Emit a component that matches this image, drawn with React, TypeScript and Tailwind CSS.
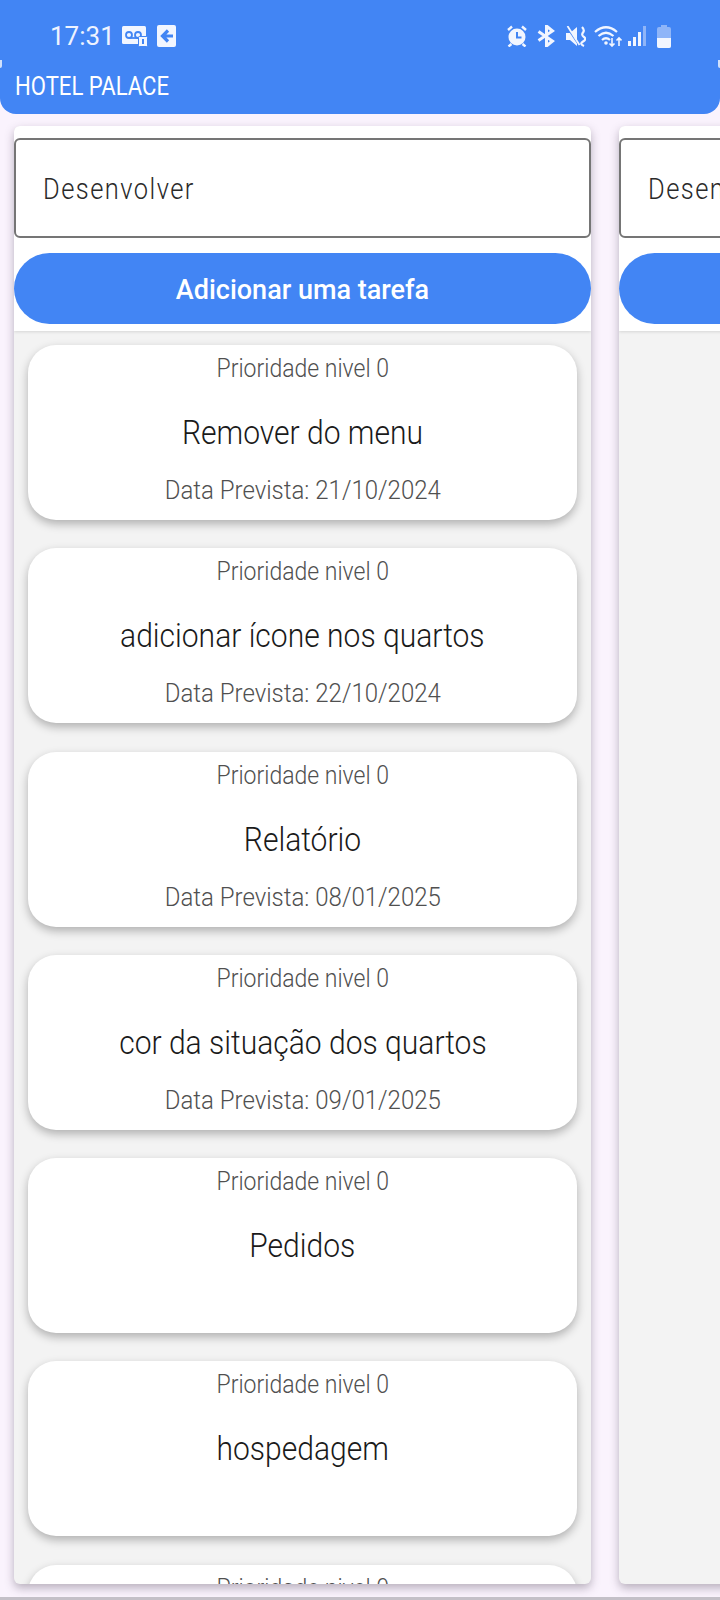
const abel = "font-['Roboto',sans-serif] font-light inline-block whitespace-nowrap";

function Card({ title, date }: { title: string; date?: string }) {
  return (
    <div className="shrink-0 h-[175px] rounded-[28px] bg-white shadow-[0_4px_10px_rgba(0,0,0,0.28)] flex flex-col items-center">
      <div className={`${abel} mt-[9px] h-[30px] leading-[30px] text-[25px] text-[#505050] scale-x-[0.92]`}>Prioridade nivel 0</div>
      <div className={`${abel} mt-[29px] h-[40px] leading-[40px] text-[33px] text-[#1a1a1a] scale-x-[0.91]`}>{title}</div>
      <div className={`${abel} mt-[23px] h-[30px] leading-[30px] text-[25px] text-[#505050] scale-x-[0.96]`}>{date}</div>
    </div>
  );
}

function Column({ children }: { children?: React.ReactNode }) {
  return (
    <div className="shrink-0 w-[577px] h-[1458px] flex flex-col bg-[#f3f3f3] rounded-[6px] overflow-hidden shadow-[0_4px_10px_rgba(60,50,70,0.35)]">
      <div className="shrink-0 bg-white h-[205px] pt-[12px] pb-[7px] flex flex-col shadow-[0_1px_3px_rgba(0,0,0,0.12)]">
        <div className="h-[100px] rounded-[6px] border-2 border-[#757575] bg-white flex items-center pl-[27px] overflow-hidden">
          <span className={`${abel} text-[30px] tracking-[1.7px] text-[#2a2a2a] origin-left scale-x-[0.85]`}>Desenvolver</span>
        </div>
        <div className="mt-[15px] h-[71px] rounded-full bg-[#4285f4] flex items-center justify-center font-['Roboto',sans-serif] font-medium text-[27px] text-white pt-[3px]">Adicionar uma tarefa</div>
      </div>
      {children}
    </div>
  );
}

const items: [string, string?][] = [
  ["Remover do menu", "Data Prevista: 21/10/2024"],
  ["adicionar ícone nos quartos", "Data Prevista: 22/10/2024"],
  ["Relatório", "Data Prevista: 08/01/2025"],
  ["cor da situação dos quartos", "Data Prevista: 09/01/2025"],
  ["Pedidos"],
  ["hospedagem"],
  [""],
];

function StatusLeft() {
  return (
    <div className="flex items-center pl-[50px]">
      <span className="w-[62px] whitespace-nowrap font-['Roboto',sans-serif] text-[26px] leading-none text-[#eef3ff]">17:31</span>
      <svg className="ml-[10px]" width="26" height="21" viewBox="0 0 26 21">
        <rect x="0" y="0" width="24" height="18" rx="1.500" fill="#f2f6ff" />
        <circle cx="7" cy="9" r="3" fill="none" stroke="#4285f4" strokeWidth="1.800" />
        <circle cx="16" cy="9" r="3" fill="none" stroke="#4285f4" strokeWidth="1.800" />
        <path d="M7 12h9" stroke="#4285f4" strokeWidth="1.800" />
        <rect x="16.500" y="10.500" width="9" height="10" rx="1" fill="#f2f6ff" stroke="#4285f4" strokeWidth="1" />
        <rect x="20" y="13" width="2" height="5" fill="#4285f4" />
      </svg>
      <svg className="ml-[9px]" width="19" height="22" viewBox="0 0 19 22">
        <rect width="19" height="22" rx="2" fill="#f2f6ff" />
        <path d="M16 11H6M11 5.500L5.500 11l5.500 5.500" fill="none" stroke="#4285f4" strokeWidth="3.200" />
      </svg>
    </div>
  );
}

function StatusRight() {
  return (
    <div className="flex items-center pr-[49px]">
      <svg width="20" height="22" viewBox="0 0 20 22">
        <circle cx="10" cy="12" r="8.500" fill="#f2f6ff" />
        <path d="M10 7v5.500h4.500" fill="none" stroke="#4285f4" strokeWidth="2" />
        <path d="M1 5l4-3.500M19 5l-4-3.500M4.500 19l-3 2.500M15.500 19l3 2.500" stroke="#f2f6ff" strokeWidth="2.400" />
      </svg>
      <svg className="ml-[10px]" width="18" height="22" viewBox="0 0 18 22">
        <path d="M1.500 6.500l14 9.500-6 5V1l6 5-14 9.500" fill="none" stroke="#f2f6ff" strokeWidth="3" />
      </svg>
      <svg className="ml-[11px]" width="20" height="21" viewBox="0 0 20 21">
        <path d="M0 7h4l7-6v19l-7-6H0z" fill="#f2f6ff" />
        <path d="M1 1l12 18" stroke="#4285f4" strokeWidth="1.800" />
        <path d="M1.500 0l12 19" stroke="#f2f6ff" strokeWidth="1.800" />
        <path d="M16 1q3 3 1 5.500t1 4.500t-1 4.500t1 4.500" fill="none" stroke="#f2f6ff" strokeWidth="2.200" />
      </svg>
      <svg className="ml-[8px]" width="28" height="22" viewBox="0 0 28 22">
        <path d="M1 7q11-9.500 22 0M4.500 11q7.500-6.500 15 0M8 15q4-3.500 8 0" fill="none" stroke="#f2f6ff" strokeWidth="2.200" />
        <circle cx="12" cy="18" r="1.800" fill="#f2f6ff" />
        <path d="M18 13v8M15.500 18.500l2.500 2.500 2.500-2.500M25 21v-8M22.500 15.500l2.500-2.500 2.500 2.500" fill="none" stroke="#f2f6ff" strokeWidth="1.600" />
      </svg>
      <svg className="ml-[6px]" width="18" height="20" viewBox="0 0 18 20">
        <rect x="0" y="15" width="3" height="5" fill="#f2f6ff" />
        <rect x="5" y="11" width="3" height="9" fill="#f2f6ff" />
        <rect x="10" y="6" width="3" height="14" fill="#f2f6ff" />
        <rect x="15" y="0" width="3" height="20" fill="#8fb5f8" />
      </svg>
      <svg className="ml-[11px]" width="14" height="23" viewBox="0 0 14 23">
        <path d="M4 0h6v2h2a2 2 0 0 1 2 2v17a2 2 0 0 1-2 2H2a2 2 0 0 1-2-2V4a2 2 0 0 1 2-2h2z" fill="#8fb5f8" />
        <path d="M0 13h14v8a2 2 0 0 1-2 2H2a2 2 0 0 1-2-2z" fill="#f2f6ff" />
      </svg>
    </div>
  );
}

export default function App() {
  return (
    <div className="w-[720px] h-[1600px] overflow-hidden bg-[#faf3fd] flex flex-col relative">
      <header className="shrink-0 h-[114px] bg-[#4285f4] rounded-b-[16px] flex flex-col relative">
        <div className="flex justify-between items-center h-[72px]">
          <StatusLeft />
          <StatusRight />
        </div>
        <div className="pl-[15px] h-[29px] leading-[29px]">
          <span className={`${abel} text-[26px] text-white font-normal origin-left scale-x-[0.85]`}>HOTEL PALACE</span>
        </div>
        <div className="absolute left-0 top-[60px] w-[2px] h-[8px] bg-[#cfe0fb] rounded-br-full" />
        <div className="absolute right-0 top-[60px] w-[2px] h-[8px] bg-[#cfe0fb] rounded-bl-full" />
      </header>
      <main className="mt-[12px] pl-[14px] flex gap-[28px]">
        <Column>
          <div className="flex flex-col gap-[28.25px] px-[14px] pt-[14px]">
            {items.map(([t, d], i) => (
              <Card key={i} title={t} date={d} />
            ))}
          </div>
        </Column>
        <Column />
      </main>
      <div className="mt-auto h-[3px] bg-[#c4c0c8]" />
    </div>
  );
}
